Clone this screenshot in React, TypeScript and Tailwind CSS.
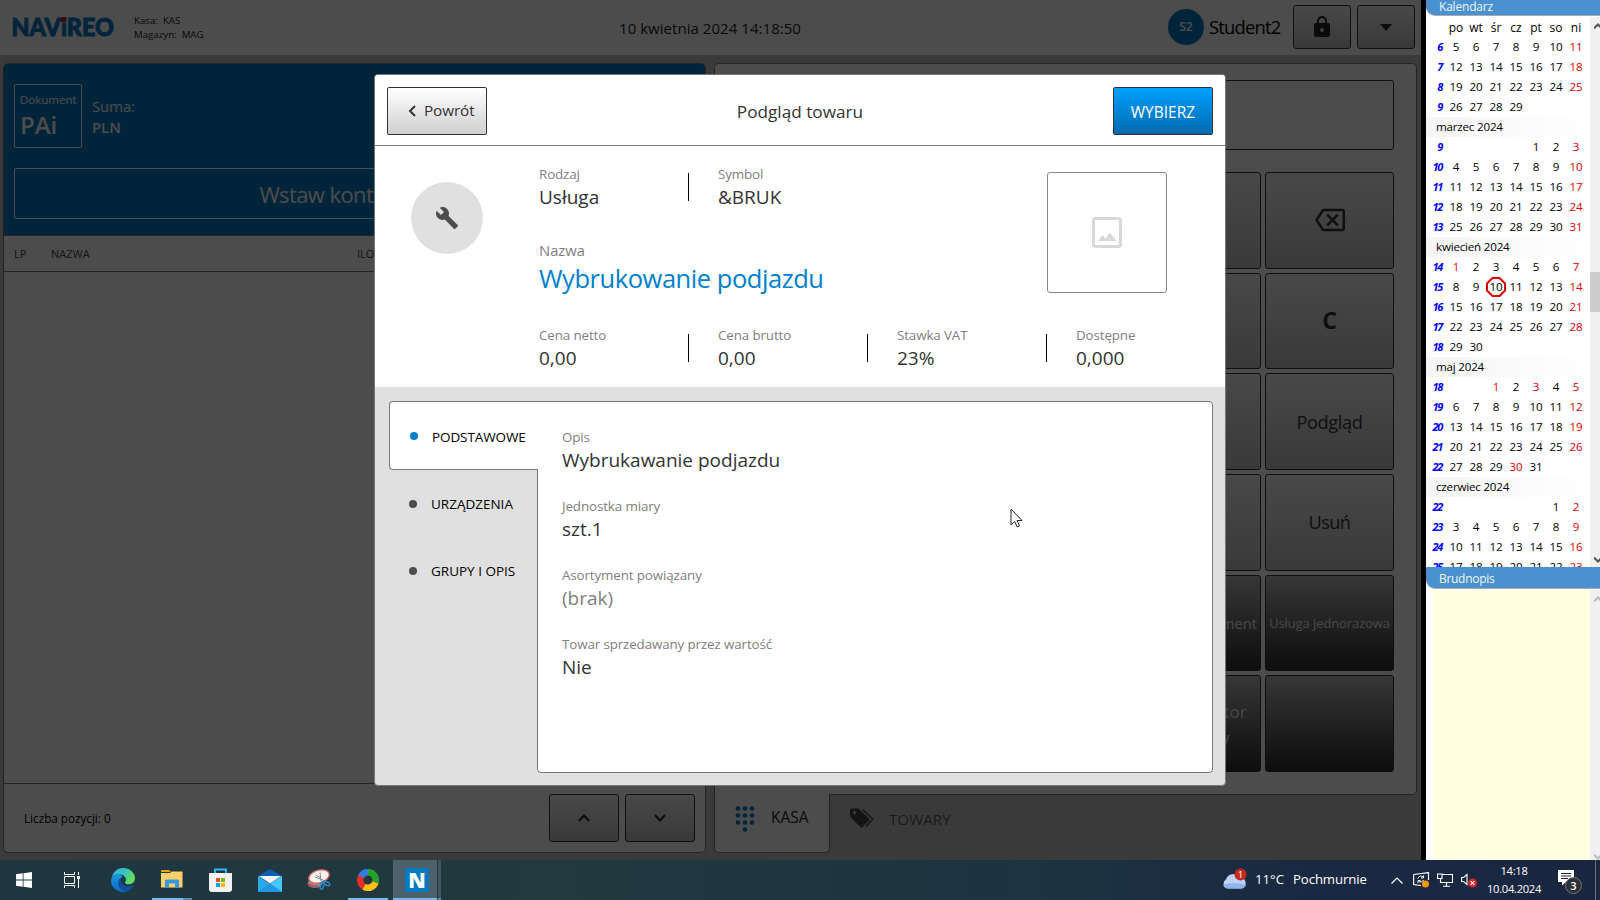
import type { ReactNode } from "react";
import { MdBuild, MdLock, MdOutlineBackspace } from "react-icons/md";

const keyLight =
  "flex items-center justify-center rounded-[3px] border border-[#383838] bg-gradient-to-b from-[#f2f2f2] to-[#c0c0c0]";
const keyDark =
  "flex items-center justify-center rounded-[3px] border border-[#303030] bg-gradient-to-b from-[#b8b8b8] to-[#303030]";

function Logo() {
  return (
    <svg className="ml-[11px] mt-[17px] h-5 w-[104px]" viewBox="0 0 104 20">
      <text
        x="0.5"
        y="18.5"
        textLength="102.5"
        lengthAdjust="spacingAndGlyphs"
        fill="#007ac1"
        stroke="#007ac1"
        strokeWidth="1"
        fontFamily="Lato, sans-serif"
        fontWeight="900"
        fontSize="24.5"
      >
        NAViREO
      </text>
      <rect x="50" y="0.5" width="5" height="4.5" fill="#e30613" />
    </svg>
  );
}

function TopBar() {
  return (
    <header className="flex h-[55px] shrink-0 items-start bg-white">
      <Logo />
      <div className="ml-[19px] mt-[14px] w-[485px] text-[9.7px] leading-[14px] text-[#222]">
        <div>Kasa:&nbsp; KAS</div>
        <div>Magazyn:&nbsp; MAG</div>
      </div>
      <div className="mt-[14px] w-[549px] whitespace-nowrap text-[15.1px] leading-7 text-[#222]">
        10 kwietnia 2024 14:18:50
      </div>
      <div className="mt-[9px] flex size-9 shrink-0 items-center justify-center rounded-full bg-[#007ac1] text-[12px] font-semibold text-white">
        S2
      </div>
      <div className="ml-[5px] mt-[13px] w-[84px] text-[18.4px] leading-7 tracking-[-0.8px] text-black">Student2</div>
      <div className={`mt-[5px] h-[44px] w-[58px] ${keyLight}`}>
        <MdLock className="size-[24px] text-[#222]" />
      </div>
      <div className={`ml-[6px] mt-[5px] h-[44px] w-[58px] ${keyLight}`}>
        <svg className="h-[7px] w-3" viewBox="0 0 12 7">
          <path d="M0 0H12L6 7Z" fill="#222" />
        </svg>
      </div>
    </header>
  );
}

function Chevron({ down }: { down?: boolean }) {
  return (
    <svg className="h-2 w-3" viewBox="0 0 12 8" fill="none" stroke="#222" strokeWidth="2">
      <path d={down ? "M1 1L6 6.5L11 1" : "M1 7L6 1.5L11 7"} />
    </svg>
  );
}

function DocumentPanel() {
  return (
    <section className="ml-[3px] mt-2 flex h-[790px] w-[703px] flex-col overflow-hidden rounded-[5px] border border-[#7b7b7b] bg-white">
      <div className="h-[172px] shrink-0 border-b border-[#7b7b7b] bg-[#007ac1] px-[10px] pt-5 text-white">
        <div className="flex">
          <div className="h-[64px] w-[68px] rounded-[2px] border border-white pl-[5px] pt-[5px]">
            <div className="text-[11.5px] leading-5">Dokument</div>
            <div className="text-[24px] font-semibold leading-[30px]">PAi</div>
          </div>
          <div className="ml-[10px] mt-[12px] text-[14.8px] leading-[21px]">
            <div>Suma:</div>
            <div className="text-[14.8px] font-semibold">PLN</div>
          </div>
        </div>
        <div className="mt-5 flex h-[51px] w-[679px] items-center justify-center rounded-[2px] border border-white pl-[2px] pt-px text-[22px] tracking-[-0.6px]">
          Wstaw kontrahenta
        </div>
      </div>
      <div className="flex h-[36px] shrink-0 items-center border-b border-[#7b7b7b] pl-[10px] pt-[2px] text-[11px] text-[#444]">
        <span className="w-[37px]">LP</span>
        <span className="w-[306px]">NAZWA</span>
        <span>ILOŚĆ</span>
      </div>
      <div className="flex-1" />
      <div className="flex h-[69px] shrink-0 items-center border-t border-[#7b7b7b] pl-5 pr-[10px]">
        <span className="mt-px flex-1 text-[11.7px] text-black">Liczba pozycji: 0</span>
        <div className={`h-12 w-[70px] ${keyLight}`}>
          <Chevron />
        </div>
        <div className={`ml-[6px] h-12 w-[70px] ${keyLight}`}>
          <Chevron down />
        </div>
      </div>
    </section>
  );
}

const keypad: { dark?: boolean; label?: ReactNode }[][] = [
  [{}, {}, {}, {}, { label: <MdOutlineBackspace className="size-[30px] text-[#333]" /> }],
  [{}, {}, {}, {}, { label: <span className="-mt-px text-[23px] font-bold">C</span> }],
  [{}, {}, {}, {}, { label: <span className="mt-[2px] text-[18.2px] tracking-[-0.4px]">Podgląd</span> }],
  [{}, {}, {}, {}, { label: <span className="mt-px text-[18.2px] tracking-[-0.6px]">Usuń</span> }],
  [
    { dark: true },
    { dark: true },
    { dark: true },
    { dark: true, label: <span className="mt-px text-[14.7px]">Nowy asortyment</span> },
    { dark: true, label: <span className="mt-px text-[12.8px]">Usługa jednorazowa</span> },
  ],
  [
    { dark: true },
    { dark: true },
    { dark: true },
    { dark: true, label: <span className="mt-[2px] text-center text-[17px] leading-[26px]">Konfigurator<br />dostawy</span> },
    { dark: true },
  ],
];

function RegisterPanel() {
  return (
    <section className="ml-2 mt-2 flex h-[790px] w-[703px] flex-col">
      <div className="flex h-[732px] shrink-0 flex-col rounded-t-[5px] rounded-br-[5px] border border-[#7b7b7b] bg-white px-[22px] pt-4">
        <div className="h-[70px] shrink-0 rounded-[3px] border border-[#383838]" />
        <div className="mt-[22px] grid h-[600px] grid-cols-[repeat(5,129px)] grid-rows-[repeat(6,1fr)] justify-end gap-1">
          {keypad.flat().map((key, i) => (
            <div key={i} className={`whitespace-nowrap ${key.dark ? `${keyDark} text-[#ededed]` : `${keyLight} text-[#333]`}`}>
              {key.label}
            </div>
          ))}
        </div>
      </div>
      <div className="flex">
        <div className="relative -mt-px flex h-[59px] w-[116px] items-start rounded-b-[5px] border border-t-0 border-[#7b7b7b] bg-white pl-[16px] text-[15.5px] leading-6 text-[#222]">
          <svg className="mt-[12px] h-[26px] w-[26px]" viewBox="0 0 26 26" fill="#007ac1">
            {[0, 1, 2].map((r) =>
              [0, 1, 2].map((c) => <circle key={`${r}${c}`} cx={7 + c * 7} cy={2.5 + r * 7} r="2.3" />),
            )}
            <circle cx="14" cy="23.5" r="2.3" />
          </svg>
          <span className="ml-[14px] mt-[11px]">KASA</span>
        </div>
        <div className="ml-[20px] flex h-[46px] items-center text-[15.2px] text-[#555]">
          <svg className="h-5 w-6" viewBox="0 0 24 20">
            <path
              d="M1 0.5H8.5L19 10.5Q20 11.5 19 12.5L12.5 19Q11.5 20 10.5 19L0.8 9.5Q0 8.5 0 7.5V1.5Q0 .5 1 .5ZM4.5 3A1.7 1.7 0 1 0 4.5 6.4 1.7 1.7 0 1 0 4.5 3Z"
              fill="#444"
              fillRule="evenodd"
            />
            <path d="M12.5 1.5L22.8 11.2L16 18.5" fill="none" stroke="#444" strokeWidth="1.5" />
          </svg>
          <span className="ml-[15px] mt-[2px]">TOWARY</span>
        </div>
      </div>
    </section>
  );
}

function Field({ label, value, muted }: { label: string; value: string; muted?: boolean }) {
  return (
    <div className="h-[46px] whitespace-nowrap">
      <div className="text-[13.4px] leading-5 tracking-[-0.13px] text-[#808080]">{label}</div>
      <div className={`text-[19px] leading-[26px] ${muted ? "text-[#808080]" : "text-[#333]"}`}>{value}</div>
    </div>
  );
}

function FieldRow({ items }: { items: [string, string][] }) {
  return (
    <div className="flex">
      {items.map(([label, value], i) => (
        <div key={label} className="flex w-[179px]">
          <div className="w-[149px]">
            <Field label={label} value={value} />
          </div>
          {(i < items.length - 1 || items.length === 1) && <div className="mt-[9px] h-7 w-px bg-black" />}
        </div>
      ))}
    </div>
  );
}

const tabs = ["URZĄDZENIA", "GRUPY I OPIS"];

function ProductDialog() {
  return (
    <div className="flex h-[712px] w-[852px] flex-col overflow-hidden rounded-[4px] border border-[#777] bg-[#e0e0e0]">
      <div className="flex h-[71px] shrink-0 items-start justify-between border-b border-[#777] bg-white px-3 pt-3">
        <div className="flex h-12 w-[100px] items-center rounded-[2px] border border-[#333] bg-gradient-to-b from-white to-[#d0d0d0] pl-5 text-[15.3px] text-[#333]">
          <svg className="h-3 w-2" viewBox="0 0 8 12" fill="none" stroke="#333" strokeWidth="2">
            <path d="M7 1L2 6L7 11" />
          </svg>
          <span className="ml-2 mt-[-2px] tracking-[-0.1px]">Powrót</span>
        </div>
        <div className="mt-[13px] text-[17.2px] leading-6 text-[#333]">Podgląd towaru</div>
        <div className="flex h-12 w-[100px] items-center justify-center rounded-[2px] border border-[#333] bg-gradient-to-b from-[#00a0ff] to-[#006bb0] pt-1 text-[15.5px] text-white">
          WYBIERZ
        </div>
      </div>
      <div className="flex h-[241px] shrink-0 bg-white">
        <div className="ml-9 mt-9 flex size-[72px] shrink-0 items-center justify-center rounded-full bg-[#e0e0e0]">
          <MdBuild className="size-6 text-[#4d4d4d]" />
        </div>
        <div className="ml-[56px]">
          <div className="flex h-[179px]">
            <div className="w-[508px] pt-[18px]">
              <div className="flex">
                <FieldRow items={[["Rodzaj", "Usługa"]]} />
                <Field label="Symbol" value="&BRUK" />
              </div>
              <div className="mt-[30px] text-[14.8px] leading-5 text-[#808080]">Nazwa</div>
              <div className="text-[25.5px] leading-9 tracking-[-0.45px] text-[#0080cb]">Wybrukowanie podjazdu</div>
            </div>
            <div className="mt-[26px] flex h-[121px] w-[120px] items-center justify-center rounded-[3px] border border-[#888]">
              <svg className="h-[31px] w-[30px]" viewBox="0 0 30 31">
                <rect x="1.5" y="1.5" width="27" height="28" rx="2" fill="none" stroke="#d8d8d8" strokeWidth="3" />
                <path d="M6 24L10.5 18L13.5 21.5L18 15.5L24 24Z" fill="#d8d8d8" />
              </svg>
            </div>
          </div>
          <FieldRow
            items={[
              ["Cena netto", "0,00"],
              ["Cena brutto", "0,00"],
              ["Stawka VAT", "23%"],
              ["Dostępne", "0,000"],
            ]}
          />
        </div>
      </div>
      <div className="ml-[14px] mt-[14px] flex text-[13.5px] text-black">
        <div className="w-[148px]">
          <div className="relative z-10 -mr-px flex h-[69px] items-center rounded-l-[4px] border border-r-0 border-[#777] bg-white pl-5">
            <span className="size-2 rounded-full bg-[#0080cb]" />
            <span className="ml-[14px] mt-[3px] tracking-[-0.1px]">PODSTAWOWE</span>
          </div>
          {tabs.map((tab) => (
            <div key={tab} className="flex h-[67px] items-center pl-5">
              <span className="size-2 rounded-full bg-[#4d4d4d]" />
              <span className="ml-[14px] mt-[2px]">{tab}</span>
            </div>
          ))}
        </div>
        <div className="flex h-[372px] w-[676px] flex-col gap-[23px] rounded-r-[4px] rounded-bl-[4px] border border-[#777] bg-white pl-6 pt-[25px]">
          <Field label="Opis" value="Wybrukawanie podjazdu" />
          <Field label="Jednostka miary" value="szt.1" />
          <Field label="Asortyment powiązany" value="(brak)" muted />
          <Field label="Towar sprzedawany przez wartość" value="Nie" />
        </div>
      </div>
    </div>
  );
}

type Month = { title?: string; firstWeek: number; offset: number; from: number; to: number; holidays: number[] };

const months: Month[] = [
  { firstWeek: 6, offset: 0, from: 5, to: 29, holidays: [] },
  { title: "marzec 2024", firstWeek: 9, offset: 4, from: 1, to: 31, holidays: [] },
  { title: "kwiecień 2024", firstWeek: 14, offset: 0, from: 1, to: 30, holidays: [1] },
  { title: "maj 2024", firstWeek: 18, offset: 2, from: 1, to: 31, holidays: [1, 3, 30] },
  { title: "czerwiec 2024", firstWeek: 22, offset: 5, from: 1, to: 23, holidays: [] },
];

function MonthBlock({ month }: { month: Month }) {
  const cells: (number | null)[] = Array(month.offset).fill(null);
  for (let d = month.from; d <= month.to; d++) cells.push(d);
  const rows: (number | null)[][] = [];
  for (let i = 0; i < cells.length; i += 7) rows.push(cells.slice(i, i + 7));
  return (
    <div>
      {month.title && (
        <div className="h-5 bg-gradient-to-r from-[#f5f5f5] to-white pl-[10px] tracking-[-0.2px]">{month.title}</div>
      )}
      {rows.map((row, i) => (
        <div key={i} className="flex h-5">
          <span className="w-[19px] shrink-0 pr-[3px] text-right font-['Noto_Sans'] text-[11px] font-bold italic tracking-[-1.3px] text-[#0000ff]">
            {month.firstWeek + i}
          </span>
          {row.map((day, c) => (
            <span
              key={c}
              className={`relative shrink-0 text-center tracking-[-0.2px] ${c === 0 ? "w-[21px] pl-px" : "w-5"} ${c === 6 || (day && month.holidays.includes(day)) ? "text-[#e00000]" : ""}`}
            >
              {day}
              {month.title === "kwiecień 2024" && day === 10 && (
                <svg className="absolute left-0 top-0 size-5" viewBox="0 0 20 20">
                  <path d="M6.5 1H13.5L19 6.5V13.5L13.5 19H6.5L1 13.5V6.5Z" fill="none" stroke="#d60000" strokeWidth="2" />
                </svg>
              )}
            </span>
          ))}
        </div>
      ))}
    </div>
  );
}

function ScrollArrow({ down, light }: { down?: boolean; light?: boolean }) {
  return (
    <svg className="ml-1 h-[6px] w-2" viewBox="0 0 8 6" fill="none" stroke={light ? "#bbb" : "#555"} strokeWidth="2">
      <path d={down ? "M0 .5L4 4.5L8 .5" : "M0 5.5L4 1.5L8 5.5"} />
    </svg>
  );
}

function Sidebar() {
  return (
    <aside className="flex h-full w-[174px] flex-col overflow-hidden bg-white text-[11.6px] leading-5 text-black">
      <div className="flex h-[15px] shrink-0 items-center rounded-bl-[9px] bg-[#4a91cf] pb-[2px] pl-[13px] text-[12px] leading-3 tracking-[-0.2px] text-[#eef5fb] shadow-[0_1px_0_#aaa]">
        Kalendarz
      </div>
      <div className="flex h-[552px] shrink-0 pt-[2px]">
        <div className="h-[550px] w-[164px] overflow-hidden">
          <div className="flex h-5 pl-5 pt-px">
            {["po", "wt", "śr", "cz", "pt", "so", "ni"].map((d) => (
              <span key={d} className="w-5 text-center text-[12px]">
                {d}
              </span>
            ))}
          </div>
          {months.map((m) => (
            <MonthBlock key={m.firstWeek} month={m} />
          ))}
        </div>
        <div className="flex w-[10px] flex-col bg-[#f0f0f0] pt-[6px]">
          <ScrollArrow />
          <div className="mt-[243px] h-10 bg-[#cdcdcd]" />
          <div className="flex-1" />
          <div className="mb-1">
            <ScrollArrow down />
          </div>
        </div>
      </div>
      <div className="flex h-[21px] shrink-0 items-center rounded-bl-[9px] bg-[#4a91cf] pl-[13px] text-[12px] text-[#eef5fb] shadow-[0_1px_0_#aaa]">
        <span className="mt-[3px] tracking-[-0.3px]">Brudnopis</span>
      </div>
      <div className="mt-[2px] flex flex-1">
        <div className="ml-[7px] w-[157px] bg-[#ffffe1]" />
        <div className="flex w-[10px] flex-col justify-between bg-[#f0f0f0] pt-[6px]">
          <ScrollArrow light />
          <ScrollArrow light down />
        </div>
      </div>
    </aside>
  );
}

function Taskbar() {
  return (
    <footer className="flex h-10 w-full items-center bg-[linear-gradient(90deg,#20363f_0%,#21393f_35%,#1c3340_65%,#1a2942_82%,#1a2640_100%)] text-[13.2px] text-white">
      <svg className="ml-4 size-4" viewBox="0 0 16 16" fill="#fff">
        <path d="M0 2.3L6.7 1.3V7.6H0ZM7.5 1.2L16 0V7.6H7.5ZM0 8.4H6.7V14.7L0 13.7ZM7.5 8.4H16V16L7.5 14.8Z" />
      </svg>
      <svg className="ml-8 size-4" viewBox="0 0 16 16" fill="none" stroke="#fff" strokeWidth="1">
        <path d="M.5 0V2.5H10.5V0M.5 16V13.5H10.5V16M.5 4.5H10.5V11.5H.5ZM14.5 0V3M14.5 7V16" />
        <path d="M13 4H16V7H13Z" fill="#fff" stroke="none" />
      </svg>
      <svg className="ml-[31px] size-6" viewBox="0 0 24 24">
        <defs>
          <linearGradient id="eg" x1="0" y1="0" x2="1" y2="0.4">
            <stop offset="0" stopColor="#2fb4ee" />
            <stop offset="0.55" stopColor="#35c3c4" />
            <stop offset="1" stopColor="#62e05a" />
          </linearGradient>
          <linearGradient id="eb" x1="0" y1="0" x2="0" y2="1">
            <stop offset="0" stopColor="#1a9be0" />
            <stop offset="1" stopColor="#0b66c4" />
          </linearGradient>
        </defs>
        <path d="M0.6 10C1.8 4 6.5 0 12 0c7 0 12 5 12 10.2 0 3.8-3 6-6.200 6-2.700 0-4-1-4-1.800 0-.7 1-1.200 1-3 0-2.500-2.600-4.800-6-4.800C4 6.600 1.500 8 .6 10Z" fill="url(#eg)" />
        <path d="M9 6.600C4 6.600 0 9 0 12.500 0 19 5.500 24 12 24c1.500 0 3-.3 4-.7C11 23 7.500 19.500 7.500 15c0-3 1.500-4.800 4-6C10.800 7.500 10 6.600 9 6.600Z" fill="url(#eb)" />
        <path d="M11 9.200C8.500 10.200 7.500 12.500 7.500 15c0 4.500 4 8.400 8.500 8.400 3 -1 5.500-3.200 6.700-5.700.3-.6-.2-.8-.7-.5C16 19.800 10.500 17 10 13c-.2-1.500.3-2.800 1-3.800Z" fill="#124f9c" />
        <circle cx="12.400" cy="12.300" r="2.300" fill="#1d3b47" />
      </svg>
      <div className="ml-[17px] flex h-10 w-10 flex-col justify-between">
        <svg className="ml-[9px] mt-[10px] h-[19px] w-[22px]" viewBox="0 0 22 19">
          <path d="M0 1Q0 0 1 0H8L10 2H0Z" fill="#e5a50a" />
          <path d="M0 3H9L10.500 1.500H21.500V17.500H0Z" fill="#ffd166" />
          <path d="M4 18V10.500Q4 9.500 5 9.500H17Q18 9.500 18 10.500V18H14V13.500H8V18Z" fill="#3a96dd" />
        </svg>
        <div className="flex h-[2px]">
          <div className="w-[31px] bg-[#76b9ed]" />
          <div className="flex-1 bg-[#5a8db3]" />
        </div>
      </div>
      <svg className="ml-[17px] h-6 w-[23px]" viewBox="0 0 23 24">
        <path d="M6 6V1.500H17V6" fill="none" stroke="#33b5f0" strokeWidth="2" />
        <path d="M0 5H23V21Q23 24 20 24H3Q0 24 0 21Z" fill="#f2f2f2" />
        <path d="M7 10H11V14H7Z" fill="#f25022" />
        <path d="M12 10H16V14H12Z" fill="#7fba00" />
        <path d="M7 15H11V19H7Z" fill="#00a4ef" />
        <path d="M12 15H16V19H12Z" fill="#ffb900" />
      </svg>
      <svg className="ml-[26px] h-[23px] w-6" viewBox="0 0 24 23">
        <path d="M0 7L12 0L24 7V10H0Z" fill="#0f5fb5" />
        <path d="M0 7L12 15L24 7V23H0Z" fill="#2ba8ea" />
        <path d="M1 7H23L12 14.500Z" fill="#f3f3f3" />
        <path d="M12 14.500L24 7V23Z" fill="#45c8f8" />
        <path d="M0 23L12 14.500L24 23Z" fill="#1f97e4" />
      </svg>
      <svg className="ml-[25px] size-[24px]" viewBox="0 0 24 24">
        <ellipse cx="8" cy="15.500" rx="7.500" ry="4.300" fill="#8d9296" />
        <path d="M1 15.500Q4 19 11 18" fill="none" stroke="#d93a3a" strokeWidth="1.300" />
        <ellipse cx="12" cy="8.500" rx="10.500" ry="6.300" transform="rotate(-16 12 8.500)" fill="#f3f3f3" stroke="#e06060" strokeWidth="1.300" />
        <path d="M13 4.500L14 13M8 9L17 12.500M9 7L13 9.500" stroke="#888" strokeWidth="1" />
        <ellipse cx="15" cy="17.500" rx="1.700" ry="3.800" transform="rotate(15 15 17.500)" fill="none" stroke="#2d86c9" strokeWidth="1.500" />
        <ellipse cx="19.500" cy="15.500" rx="1.700" ry="3.600" transform="rotate(-65 19.500 15.500)" fill="none" stroke="#2d86c9" strokeWidth="1.500" />
      </svg>
      <div className="ml-[17px] flex h-10 w-10 flex-col justify-between">
        <svg className="ml-[9px] mt-[9px] size-[22px]" viewBox="0 0 22 22" fill="none" strokeWidth="6.500">
          <circle cx="11" cy="11" r="7.800" stroke="#e52d27" />
          <path d="M4 7.500A7.800 7.800 0 0 1 12 3.200" stroke="#2f7de1" />
          <path d="M11 3.200A7.800 7.800 0 0 1 18.400 13.500" stroke="#1fa22e" />
          <path d="M18.400 13.500A7.800 7.800 0 0 1 7 17.700" stroke="#fbc116" />
        </svg>
        <div className="h-[2px] bg-[#76b9ed]" />
      </div>
      <div className="ml-[5px] flex h-10 w-11 flex-col justify-between bg-[#4c6169]">
        <div className="ml-3 mt-2 flex size-6 items-center justify-center bg-[#007ac1] text-[21px] font-extrabold leading-6">N</div>
        <div className="h-[2px] bg-[#76b9ed]" />
      </div>
      <div className="ml-px h-10 w-[3px] border-b-2 border-[#5a8db3] bg-[#3f545c]" />
      <div className="flex-1" />
      <svg className="h-6 w-[26px] shrink-0" viewBox="0 0 26 24">
        <path d="M5 20.500A5 5 0 0 1 4 11.500A7.500 7.500 0 0 1 17.500 9.500A5.700 5.700 0 0 1 20 20.500Z" fill="#bcd3f5" />
        <path d="M5 20.500A5 5 0 0 1 1 17Q12 13 24 17A5 5 0 0 1 20 20.500Z" fill="#8fb3ec" />
        <circle cx="18.500" cy="6.500" r="6" fill="#c42b1c" />
        <text x="18.500" y="10" textAnchor="middle" fontSize="9.500" fill="#fff">1</text>
      </svg>
      <span className="ml-[7px] w-[38px]">11°C</span>
      <span className="w-[98px] tracking-[-0.1px]">Pochmurnie</span>
      <svg className="h-[7px] w-3" viewBox="0 0 12 7" fill="none" stroke="#fff" strokeWidth="1.200">
        <path d="M.5 6.500L6 1L11.500 6.500" />
      </svg>
      <svg className="ml-[10px] h-4 w-[17px]" viewBox="0 0 17 16" fill="none" stroke="#fff" strokeWidth="1.200">
        <path d="M.6 2.500L15.500 .6V8M.6 2.500V12.500L8 13.500" />
        <path d="M5 6.500A3 3 0 0 1 10.500 5.500M10.500 3.500V6H8M10.500 8A3 3 0 0 1 5.500 9M5 11V8.500H7.500" strokeWidth="1" />
        <circle cx="12.500" cy="12" r="3.500" fill="#ff9800" stroke="none" />
      </svg>
      <svg className="ml-[7px] h-[14px] w-4" viewBox="0 0 16 14" fill="none" stroke="#fff" strokeWidth="1.100">
        <path d="M5.500 1.500H15.500V9.500H3.500V6M.5 1H5V5.500H.5ZM9.500 9.500V13M6 13.300H13" />
      </svg>
      <svg className="ml-[8px] h-[15px] w-4" viewBox="0 0 16 15" fill="none" stroke="#fff" strokeWidth="1.100">
        <path d="M.6 4.500H2.500L6 1.500V11.500L2.500 8.500H.6Z" />
        <circle cx="11.500" cy="10" r="4.500" fill="#d8262c" stroke="none" />
        <path d="M9.700 8.200L13.300 11.800M13.300 8.200L9.700 11.800" />
      </svg>
      <div className="ml-[10px] w-[54px] whitespace-nowrap text-center text-[11.200px] leading-[18px] tracking-[-0.3px]">
        <div>14:18</div>
        <div>10.04.2024</div>
      </div>
      <svg className="ml-[17px] mt-1 h-6 w-6" viewBox="0 0 24 24">
        <path d="M0 0H16V12H8L4 15.500V12H0Z" fill="#fff" />
        <path d="M3 3.500H13M3 6H13M3 8.500H10" stroke="#1a2640" strokeWidth="1" />
        <circle cx="15.500" cy="15.500" r="8" fill="#2b3038" stroke="#777" strokeWidth="1" />
        <text x="15.500" y="19.500" textAnchor="middle" fontSize="11" fontWeight="600" fill="#fff">3</text>
      </svg>
      <div className="ml-[13px] h-10 w-px bg-[#6a7385]" />
      <div className="w-1" />
    </footer>
  );
}

export default function App() {
  return (
    <div className="h-[900px] w-[1600px] overflow-hidden bg-black font-['Open_Sans','Noto_Sans',sans-serif]">
      <div className="relative flex h-[860px]">
        <div className="relative mr-[5px] flex h-full w-[1421px] flex-col bg-[#c3c3c3]">
          <TopBar />
          <div className="flex">
            <DocumentPanel />
            <RegisterPanel />
          </div>
          <div className="absolute inset-0 bg-black/70" />
        </div>
        <Sidebar />
        <div className="absolute inset-0 flex items-center justify-center">
          <ProductDialog />
        </div>
        <svg className="absolute left-[1010px] top-[508px] h-5 w-[13px]" viewBox="0 0 13 20">
          <path d="M1 1V17L4.700 13.500L7.200 19L9.500 18L7.100 12.500H12Z" fill="#fff" stroke="#223" strokeWidth="1" />
        </svg>
      </div>
      <Taskbar />
    </div>
  );
}
